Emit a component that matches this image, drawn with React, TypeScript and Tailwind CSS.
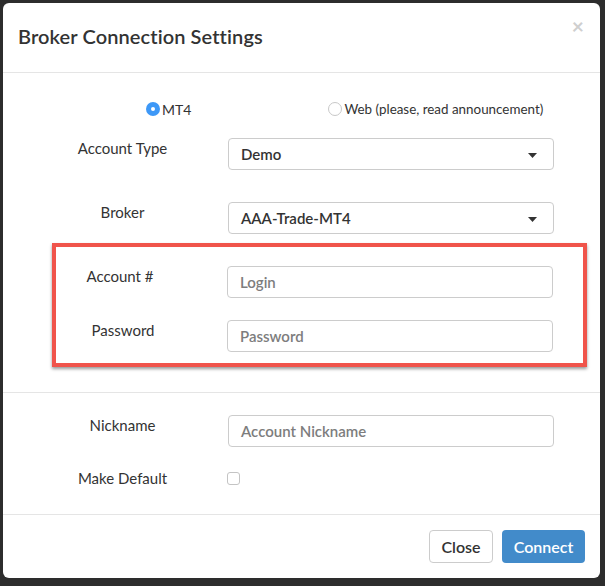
import React from "react";

const font = { fontFamily: "Lato, 'Open Sans', sans-serif" };

function Caret() {
  return (
    <svg width="9" height="5" viewBox="0 0 9 5" className="absolute right-[16px] top-[14px]">
      <path d="M0 0 L9 0 L4.5 5 Z" fill="#333" />
    </svg>
  );
}

function Select({ value }: { value: string }) {
  return (
    <div className="relative w-[326px] h-[32px] border border-[#cccccc] rounded-[4px] bg-white flex items-center pl-[12px] text-[15px] font-semibold text-[#333]">
      {value}
      <Caret />
    </div>
  );
}

function Input({ placeholder }: { placeholder: string }) {
  return (
    <div className="w-[326px] h-[32px] border border-[#cccccc] rounded-[4px] bg-white flex items-center pl-[12px] text-[15px] font-semibold text-[#7d7d7d]">
      {placeholder}
    </div>
  );
}

export default function App() {
  return (
    <div className="w-[605px] h-[586px] bg-[#2d2d2d] pt-[3px] pl-[3px] pr-[5px] pb-[8px]" style={font}>
      <div className="bg-white rounded-[6px] h-full flex flex-col text-[#333]">
        {/* header */}
        <div className="h-[70px] border-b border-[#e5e5e5] flex items-center justify-between pl-[15px] pr-[16px]">
          <div className="text-[20px] font-semibold text-[#333] tracking-[0.1px] mt-[-3px]">Broker Connection Settings</div>
          <div className="self-start mt-[12px] text-[21px] font-bold text-[#cfcfcf] leading-none">×</div>
        </div>
        {/* body */}
        <div className="flex flex-col">
          {/* radios */}
          <div className="h-[20px] mt-[26px] flex items-center text-[14px]">
            <div className="ml-[143px] flex items-center">
              <span className="w-[14px] h-[14px] rounded-full bg-[#3d98f7] flex items-center justify-center">
                <span className="w-[4px] h-[4px] rounded-full bg-white" />
              </span>
              <span className="ml-[2px]">MT4</span>
            </div>
            <div className="ml-[137px] flex items-center">
              <span className="w-[14px] h-[14px] rounded-full border border-[#c8c8c8] bg-white" />
              <span className="ml-[2px] text-[13.4px]">Web (please, read announcement)</span>
            </div>
          </div>
          {/* account type */}
          <div className="flex items-start mt-[19px]">
            <div className="w-[165px] ml-[37px] text-center text-[15px] leading-[20px]">Account Type</div>
            <div className="ml-[23px]"><Select value="Demo" /></div>
          </div>
          {/* broker */}
          <div className="flex items-start mt-[32px]">
            <div className="w-[165px] ml-[37px] text-center text-[15px] leading-[20px]">Broker</div>
            <div className="ml-[23px]"><Select value="AAA-Trade-MT4" /></div>
          </div>
          {/* red box */}
          <div className="mt-[9px] ml-[49px] w-[535px] h-[124px] border-[4px] border-[#f0544b] shadow-[0_2px_3px_rgba(0,0,0,0.4)] flex flex-col">
            <div className="flex items-start mt-[19px]">
              <div className="w-[130px] ml-[-1px] text-center text-[15px] leading-[20px]">Account #</div>
              <div className="ml-[42px]"><Input placeholder="Login" /></div>
            </div>
            <div className="flex items-start mt-[22px]">
              <div className="w-[130px] ml-[2px] text-center text-[15px] leading-[20px]">Password</div>
              <div className="ml-[39px]"><Input placeholder="Password" /></div>
            </div>
          </div>
          <div className="mt-[25px] border-t border-[#e5e5e5]" />
          {/* nickname */}
          <div className="flex items-start mt-[22px]">
            <div className="w-[165px] ml-[37px] text-center text-[15px] leading-[20px]">Nickname</div>
            <div className="ml-[23px]"><Input placeholder="Account Nickname" /></div>
          </div>
          {/* make default */}
          <div className="flex items-center mt-[21px] h-[20px]">
            <div className="w-[165px] ml-[37px] text-center text-[15px] leading-[20px]">Make Default</div>
            <div className="ml-[22px] w-[13px] h-[13px] rounded-[3px] border border-[#c4c4c4] bg-white" />
          </div>
        </div>
        <div className="flex-1" />
        {/* footer */}
        <div className="border-t border-[#e5e5e5] flex justify-end items-center gap-[9px] pt-[15px] pb-[15px] pr-[15px]">
          <div className="w-[64px] h-[33px] border border-[#cccccc] rounded-[4px] bg-white flex items-center justify-center text-[16px] font-semibold text-[#333]">Close</div>
          <div className="w-[83px] h-[33px] rounded-[4px] bg-[#428bca] flex items-center justify-center text-[16px] font-semibold text-white">Connect</div>
        </div>
      </div>
    </div>
  );
}
